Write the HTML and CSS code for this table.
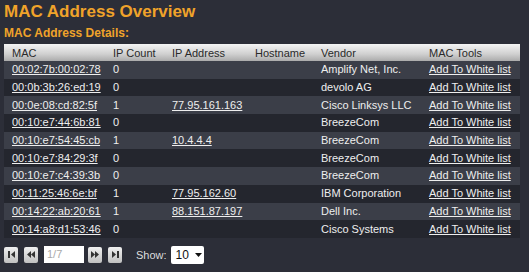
FILE: index.html
```html
<!DOCTYPE html>
<html>
<head>
<meta charset="utf-8">
<link rel="stylesheet" href="styles.css">
</head>
<body>
<div class="page">
  <h1 class="title">MAC Address Overview</h1>
  <h2 class="subtitle">MAC Address Details:</h2>
  <table class="grid">
    <thead>
      <tr>
        <th class="c-mac">MAC</th>
        <th class="c-cnt">IP Count</th>
        <th class="c-ip">IP Address</th>
        <th class="c-host">Hostname</th>
        <th class="c-ven">Vendor</th>
        <th class="c-tool">MAC Tools</th>
      </tr>
    </thead>
    <tbody>
      <tr><td><a>00:02:7b:00:02:78</a></td><td>0</td><td></td><td></td><td>Amplify Net, Inc.</td><td><a>Add To White list</a></td></tr>
      <tr><td><a>00:0b:3b:26:ed:19</a></td><td>0</td><td></td><td></td><td>devolo AG</td><td><a>Add To White list</a></td></tr>
      <tr><td><a>00:0e:08:cd:82:5f</a></td><td>1</td><td><a>77.95.161.163</a></td><td></td><td>Cisco Linksys LLC</td><td><a>Add To White list</a></td></tr>
      <tr><td><a>00:10:e7:44:6b:81</a></td><td>0</td><td></td><td></td><td>BreezeCom</td><td><a>Add To White list</a></td></tr>
      <tr><td><a>00:10:e7:54:45:cb</a></td><td>1</td><td><a>10.4.4.4</a></td><td></td><td>BreezeCom</td><td><a>Add To White list</a></td></tr>
      <tr><td><a>00:10:e7:84:29:3f</a></td><td>0</td><td></td><td></td><td>BreezeCom</td><td><a>Add To White list</a></td></tr>
      <tr><td><a>00:10:e7:c4:39:3b</a></td><td>0</td><td></td><td></td><td>BreezeCom</td><td><a>Add To White list</a></td></tr>
      <tr><td><a>00:11:25:46:6e:bf</a></td><td>1</td><td><a>77.95.162.60</a></td><td></td><td>IBM Corporation</td><td><a>Add To White list</a></td></tr>
      <tr><td><a>00:14:22:ab:20:61</a></td><td>1</td><td><a>88.151.87.197</a></td><td></td><td>Dell Inc.</td><td><a>Add To White list</a></td></tr>
      <tr><td><a>00:14:a8:d1:53:46</a></td><td>0</td><td></td><td></td><td>Cisco Systems</td><td><a>Add To White list</a></td></tr>
    </tbody>
  </table>
  <div class="pager">
    <span class="pbtn"><svg width="9" height="9" viewBox="0 0 9 9"><rect x="1" y="1" width="2" height="7" fill="#333"/><path d="M8 1 L4 4.5 L8 8 Z" fill="#333"/></svg></span>
    <span class="pbtn"><svg width="10" height="9" viewBox="0 0 10 9"><path d="M5 1 L1 4.5 L5 8 Z M9 1 L5 4.5 L9 8 Z" fill="#333"/></svg></span>
    <span class="pinput">1/7</span>
    <span class="pbtn"><svg width="10" height="9" viewBox="0 0 10 9"><path d="M1 1 L5 4.5 L1 8 Z M5 1 L9 4.5 L5 8 Z" fill="#333"/></svg></span>
    <span class="pbtn"><svg width="9" height="9" viewBox="0 0 9 9"><path d="M1 1 L5 4.5 L1 8 Z" fill="#333"/><rect x="6" y="1" width="2" height="7" fill="#333"/></svg></span>
    <span class="show">Show:</span>
    <span class="select">10 <svg width="7" height="4" viewBox="0 0 7 4"><path d="M0 0 L7 0 L3.5 4 Z" fill="#111"/></svg></span>
  </div>
</div>
</body>
</html>
```

FILE: styles.css
```css
html, body {
  margin: 0;
  padding: 0;
  background: #2c2e38;
}
.page {
  padding: 2px 4px 0 4px;
  font-family: "Liberation Sans", Arial, sans-serif;
  color: #eeeeee;
  font-size: 11px;
}
.title {
  margin: 0;
  font-size: 17px;
  line-height: 20px;
  font-weight: bold;
  color: #f0a32a;
}
.subtitle {
  margin: 4px 0 0 0;
  font-size: 12px;
  line-height: 14px;
  font-weight: bold;
  color: #f0a32a;
}
.grid {
  margin-top: 4px;
  width: 516px;
  border-collapse: collapse;
  table-layout: fixed;
}
.grid th {
  height: 17px;
  padding: 0 0 0 8px;
  text-align: left;
  font-weight: normal;
  color: #2a2a2a;
  font-size: 11px;
  background: linear-gradient(#f4f4f4, #cfcfcf 60%, #ababab);
}
.grid td {
  height: 17.7px;
  padding: 0 0 0 8px;
  white-space: nowrap;
  overflow: hidden;
  line-height: 17px;
}
.grid tbody tr:nth-child(odd) td { background: #3b3e48; }
.grid tbody tr:nth-child(even) td { background: #24262e; }
.c-mac { width: 93px; }
.c-cnt { width: 51px; }
.c-ip { width: 75px; }
.c-host { width: 58px; }
.c-ven { width: 100px; }
.c-tool { width: auto; }
.grid a {
  color: #eeeeee;
  text-decoration: underline;
}
.pager {
  display: flex;
  align-items: center;
  margin-top: 8px;
  height: 18px;
}
.pbtn {
  display: flex;
  align-items: center;
  justify-content: center;
  width: 14px;
  height: 16px;
  background: linear-gradient(#f0f0f0, #c0c0c0);
  border-radius: 2px;
  margin-right: 6px;
}
.pinput {
  width: 37px;
  height: 17px;
  background: #fff;
  color: #aaa;
  padding-left: 3px;
  line-height: 17px;
  margin-right: 4px;
}
.show {
  margin-left: 8px;
  color: #ddd;
}
.select {
  display: flex;
  align-items: center;
  gap: 6px;
  margin-left: 4px;
  height: 18px;
  width: 28px;
  padding-left: 5px;
  background: #fff;
  color: #111;
  font-size: 12px;
  border-radius: 2px;
}
```
